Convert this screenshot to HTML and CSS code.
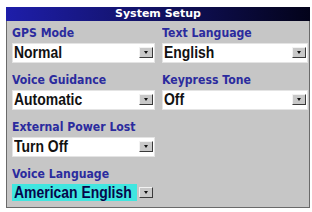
FILE: index.html
```html
<!DOCTYPE html>
<html lang="en">
<head>
  <meta charset="UTF-8" />
  <title>System Setup</title>
  <link rel="stylesheet" href="styles.css">
</head>
<body>
  <div class="window">
    <div class="titlebar">System Setup</div>
    <div class="panel">
      <div class="column left">
        <div class="field">
          <div class="label"><span class="text">GPS Mode</span></div>
          <div class="select"><span class="value"><span class="text">Normal</span></span><span class="arrow"></span></div>
        </div>
        <div class="field">
          <div class="label"><span class="text">Voice Guidance</span></div>
          <div class="select"><span class="value"><span class="text">Automatic</span></span><span class="arrow"></span></div>
        </div>
        <div class="field">
          <div class="label"><span class="text">External Power Lost</span></div>
          <div class="select"><span class="value"><span class="text">Turn Off</span></span><span class="arrow"></span></div>
        </div>
        <div class="field">
          <div class="label"><span class="text">Voice Language</span></div>
          <div class="select focused"><span class="value"><span class="text">American English</span></span><span class="arrow"></span></div>
        </div>
      </div>
      <div class="column right">
        <div class="field">
          <div class="label"><span class="text">Text Language</span></div>
          <div class="select"><span class="value"><span class="text">English</span></span><span class="arrow"></span></div>
        </div>
        <div class="field">
          <div class="label"><span class="text">Keypress Tone</span></div>
          <div class="select"><span class="value"><span class="text">Off</span></span><span class="arrow"></span></div>
        </div>
      </div>
    </div>
  </div>
</body>
</html>
```

FILE: styles.css
```css
body {
  margin: 0;
  background: #ffffff;
  font-family: "DejaVu Sans", sans-serif;
}

.window {
  margin: 7px 0 0 6px;
  width: 304px;
  height: 201px;
  box-sizing: border-box;
  background: #c6c6c6;
  border: 1px solid #6a6a6a;
  border-top: none;
  display: flex;
  flex-direction: column;
}

.titlebar {
  height: 14px;
  margin: 0 -1px;
  background: linear-gradient(to right, #1e1eaa, #10105a 55%, #03031a);
  color: #ffffff;
  font-size: 11px;
  font-weight: bold;
  line-height: 14px;
  text-align: center;
}

.panel {
  display: flex;
  gap: 7px;
  padding: 4px 1px 0 5px;
}

.column {
  display: flex;
  flex-direction: column;
  gap: 9px;
}

.left {
  width: 143px;
}

.right {
  width: 146px;
}

.label {
  height: 15px;
  margin-bottom: 3px;
  color: #2b2b9e;
  font-size: 13px;
  font-weight: bold;
  line-height: 15px;
  white-space: nowrap;
}

.label .text {
  transform: scaleX(0.84);
}

.select {
  position: relative;
  height: 20px;
  background: #ffffff;
  box-shadow: inset 0 0 0 1px #e4e4e4;
}

.value {
  display: block;
  padding-left: 2px;
  white-space: nowrap;
  font-family: "Liberation Sans", sans-serif;
  font-size: 17px;
  font-weight: bold;
  line-height: 20px;
  color: #111111;
}

.text {
  display: inline-block;
  transform: scaleX(0.82);
  transform-origin: left center;
}

.focused {
  background: transparent;
  box-shadow: none;
}

.focused .value {
  width: 123px;
  height: 17px;
  line-height: 17px;
  background: #40e6e0;
  color: #06064a;
}

.arrow {
  position: absolute;
  right: 2px;
  top: 4px;
  width: 14px;
  height: 11px;
  box-sizing: border-box;
  background: #c8c8c8;
  border: 1px solid;
  border-color: #f2f2f2 #3a3a3a #3a3a3a #f2f2f2;
}

.arrow::after {
  content: "";
  position: absolute;
  left: 4px;
  top: 3px;
  border-left: 2px solid transparent;
  border-right: 2px solid transparent;
  border-top: 3px solid #111111;
}

.focused .arrow {
  top: 3px;
}
```
